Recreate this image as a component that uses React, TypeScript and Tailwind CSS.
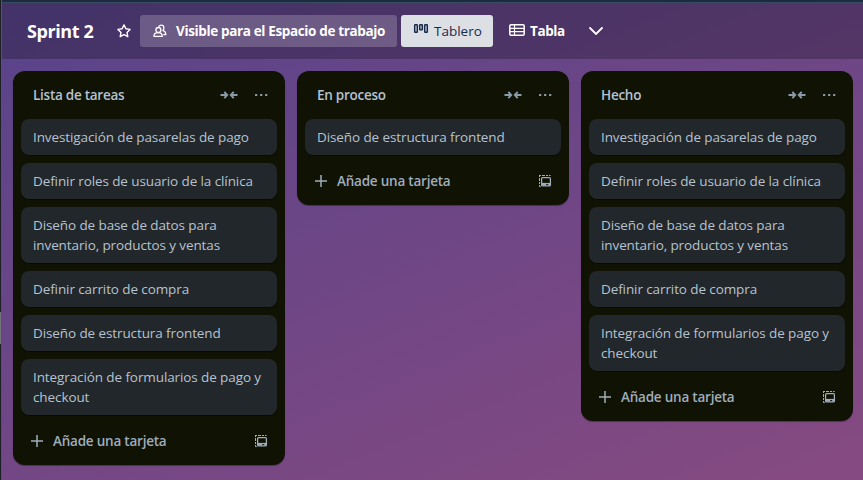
import type { ReactNode } from "react";

const tasks = {
  pasarelas: ["Investigación de pasarelas de pago"],
  roles: ["Definir roles de usuario de la clínica"],
  base: ["Diseño de base de datos para", "inventario, productos y ventas"],
  carrito: ["Definir carrito de compra"],
  frontend: ["Diseño de estructura frontend"],
  formularios: ["Integración de formularios de pago y", "checkout"],
};

const lists = [
  {
    title: "Lista de tareas",
    cards: [tasks.pasarelas, tasks.roles, tasks.base, tasks.carrito, tasks.frontend, tasks.formularios],
  },
  { title: "En proceso", cards: [tasks.frontend] },
  {
    title: "Hecho",
    cards: [tasks.pasarelas, tasks.roles, tasks.base, tasks.carrito, tasks.formularios],
  },
];

function Icon({ children, className }: { children: ReactNode; className?: string }) {
  return (
    <svg viewBox="0 0 16 16" width="16" height="16" fill="none" stroke="currentColor" className={`shrink-0 ${className ?? ""}`}>
      {children}
    </svg>
  );
}

const Star = () => (
  <Icon>
    <path strokeWidth="1.4" strokeLinejoin="round" d="M8 1.9l1.9 3.9 4.2.6-3.1 3 .8 4.3L8 11.6l-3.8 2.1.8-4.3-3.1-3 4.2-.6z" />
  </Icon>
);

const People = () => (
  <Icon>
    <path strokeWidth="1.3" strokeLinejoin="round" d="M1.9 13.3c0-2.4 1.7-3.7 4.2-3.7s4.2 1.3 4.2 3.7z" />
    <circle strokeWidth="1.3" cx="6.4" cy="7" r="2.5" />
    <path strokeWidth="1.3" strokeLinecap="round" strokeLinejoin="round" d="M6.8 3.5c.5-.9 1.4-1.3 2.4-1.3 1.6 0 2.7 1.2 2.7 2.7 0 1-.4 1.9-1.1 2.5 1.9.6 3 2 3 4.3h-2" />
  </Icon>
);

const Board = () => (
  <Icon className="-mt-[2px]">
    <g strokeWidth="1.5">
      <rect x="1.7" y="2.7" width="2.6" height="7.6" rx=".5" />
      <rect x="6.7" y="2.7" width="2.6" height="5.1" rx=".5" />
      <rect x="11.7" y="2.7" width="2.6" height="7.6" rx=".5" />
    </g>
  </Icon>
);

const Table = () => (
  <Icon className="-mt-[2px]">
    <rect x=".8" y="2.8" width="14.4" height="10.4" rx="1.2" strokeWidth="1.5" />
    <path strokeWidth="1.2" d="M1 6.3h14M1 9.7h14M5.5 3v10" />
  </Icon>
);

const Collapse = () => (
  <svg viewBox="0 0 18 10" width="18" height="10" fill="none" stroke="currentColor" strokeWidth="1.9" className="shrink-0">
    <path d="M.5 5H7M4.3 1.9L7.2 5 4.3 8.1M17.5 5H11M13.7 1.9L10.8 5l2.9 3.1" />
  </svg>
);

const Dots = () => (
  <Icon>
    <g fill="currentColor" stroke="none">
      <rect x="2" y="7" width="2.3" height="2.1" rx=".5" />
      <rect x="7" y="7" width="2.3" height="2.1" rx=".5" />
      <rect x="12" y="7" width="2.3" height="2.1" rx=".5" />
    </g>
  </Icon>
);

const Template = () => (
  <Icon>
    <rect x="4.6" y="4.6" width="8.8" height="8.3" rx="1" strokeWidth="1.3" />
    <path strokeWidth="1.2" d="M4.6 10.5h8.8" />
    <path strokeWidth="1.6" d="M4.6 11.7h4.6M11.2 11.7h2.2" />
    <path strokeWidth="1" d="M2 2.5h2M5 2.5h3M9 2.5h2M12 2.5h1.6M2.5 2v2M2.5 5v3M2.5 9v2M2.5 12v1.6h1.3" />
  </Icon>
);

function List({ title, cards }: { title: string; cards: string[][] }) {
  return (
    <section className="w-[272px] shrink-0 rounded-xl bg-[#101204] px-2 pb-[6px] shadow-[0_1px_1px_#09102066]">
      <header className="flex h-12 items-center pr-2 pl-3 text-[#8c9bab]">
        <h2 className="flex-1 text-[13.5px] leading-5 font-semibold tracking-[-0.26px] text-[#b6c2cf]">{title}</h2>
        <Collapse />
        <span className="ml-[15px] flex">
          <Dots />
        </span>
      </header>
      <ol className="flex flex-col gap-2">
        {cards.map((lines) => (
          <li key={lines[0]} className="rounded-lg bg-[#22272b] px-3 py-2 text-[13.5px] leading-5 tracking-[-0.1px] whitespace-nowrap text-[#b6c2cf] shadow-[0_1px_1px_#03040480]">
            {lines.map((line) => (
              <span key={line} className="block">{line}</span>
            ))}
          </li>
        ))}
      </ol>
      <footer className="mt-2 flex h-9 items-center pr-2 pl-2 text-[#9fadbc]">
        <Icon>
          <path strokeWidth="1.5" d="M8 2v12M2 8h12" />
        </Icon>
        <span className="ml-2 flex-1 text-[13.5px] leading-5 font-semibold tracking-[-0.22px]">Añade una tarjeta</span>
        <Template />
      </footer>
    </section>
  );
}

export default function App() {
  return (
    <div className="flex h-[480px] w-[863px] overflow-hidden bg-[#1d2125] font-['Open_Sans','Noto_Sans',sans-serif]">
      <aside className="w-px shrink-0 bg-[#1d2125] pt-[312px]">
        <div className="h-8 bg-[#717578]" />
      </aside>
      <main className="flex min-w-0 flex-1 flex-col border-l border-[#5c4b7d] bg-linear-[158deg] from-[#58438a] to-[#864a81]">
        <div className="h-[3px] shrink-0 border-b border-[#394b62] bg-[#1d2b41]" />
        <nav className="flex h-14 shrink-0 items-center bg-[#0000003d] pl-[25px] text-[13.5px] font-bold text-white">
          <h1 className="w-[89px] text-[18px] leading-6 tracking-[-0.4px] whitespace-nowrap">Sprint 2</h1>
          <Star />
          <button className="ml-2 flex h-8 w-[257px] items-center rounded-[3px] bg-[#ffffff33] pl-3 tracking-[-0.36px] whitespace-nowrap">
            <People />
            <span className="ml-2">Visible para el Espacio de trabajo</span>
          </button>
          <button className="ml-1 flex h-8 w-[92px] items-center rounded-[3px] bg-[#dcdfe4] pl-3 font-normal text-[#172b4d]">
            <Board />
            <span className="ml-[5px]">Tablero</span>
          </button>
          <button className="ml-4 flex items-center">
            <Table />
            <span className="ml-[5px] tracking-[-0.4px]">Tabla</span>
          </button>
          <svg viewBox="0 0 14 8" width="14" height="8" fill="none" stroke="currentColor" strokeWidth="1.8" strokeLinecap="round" className="ml-6">
            <path d="M1 1l6 6 6-6" />
          </svg>
        </nav>
        <div className="flex items-start gap-3 pt-3 pl-[11px]">
          {lists.map((list) => (
            <List key={list.title} {...list} />
          ))}
        </div>
      </main>
    </div>
  );
}
